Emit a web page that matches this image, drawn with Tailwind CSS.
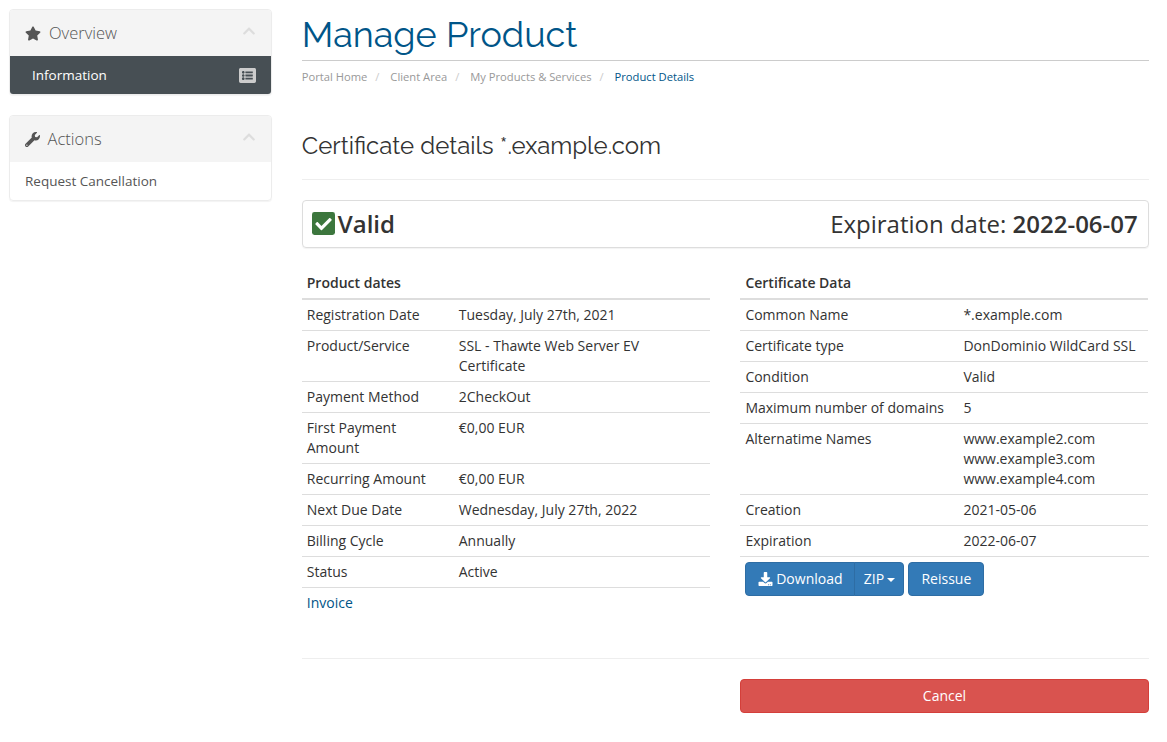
<!DOCTYPE html>
<html lang="en">
<head>
<meta charset="utf-8">
<title>Manage Product</title>
<script src="https://cdn.jsdelivr.net/npm/@tailwindcss/browser@4"></script>
</head>
<body class="bg-white font-['Open_Sans','Noto_Sans',sans-serif] text-sm leading-5 text-[#333]">
<div class="flex h-[742px] overflow-hidden">
  <aside class="ml-[9px] mt-[9px] w-[263px] shrink-0">
    <section class="mb-5 h-[86px] overflow-hidden rounded border border-[#ececec] shadow-[0_1px_1px_rgba(0,0,0,0.05)]">
      <h3 class="flex h-[46px] items-center bg-[#f4f4f4] pl-[15px] pr-[15px] text-[16.5px] font-light text-[#555]">
        <svg class="mt-px h-[15px] w-[16px] fill-[#555]" viewBox="0 0 576 512"><path d="M259.3 17.8L194 150.2 47.9 171.5c-26.2 3.8-36.7 36.1-17.7 54.6l105.7 103-25 145.5c-4.5 26.3 23.2 46 46.4 33.700L288 439.600l130.700 68.700c23.200 12.200 50.900-7.400 46.400-33.700l-25-145.500 105.700-103c19-18.500 8.500-50.800-17.700-54.600L382 150.200 316.700 17.800c-11.700-23.600-45.600-23.900-57.400 0z"/></svg>
        <span class="ml-2 grow">Overview</span>
        <svg class="-mt-1 h-[14px] w-[14px] fill-[#ddd]" viewBox="0 0 448 512"><path d="M240.971 130.524l194.343 194.343c9.373 9.373 9.373 24.569 0 33.941l-22.667 22.667c-9.357 9.357-24.522 9.375-33.901.040L224 227.495 69.255 381.516c-9.379 9.335-24.544 9.317-33.901-.040l-22.667-22.667c-9.373-9.373-9.373-24.569 0-33.941L207.030 130.525c9.372-9.373 24.568-9.373 33.941-.001z"/></svg>
      </h3>
      <a class="flex h-[38px] items-center justify-between bg-[#474f54] pl-[22px] pr-[15px] text-[13.5px] text-white">
        <span>Information</span>
        <svg class="h-[17px] w-[17px] fill-[#ccc]" viewBox="0 0 512 512"><path d="M464 480H48c-26.510 0-48-21.490-48-48V80c0-26.510 21.490-48 48-48h416c26.510 0 48 21.490 48 48v352c0 26.510-21.490 48-48 48zM128 120c-22.091 0-40 17.909-40 40s17.909 40 40 40 40-17.909 40-40-17.909-40-40-40zm0 96c-22.091 0-40 17.909-40 40s17.909 40 40 40 40-17.909 40-40-17.909-40-40-40zm0 96c-22.091 0-40 17.909-40 40s17.909 40 40 40 40-17.909 40-40-17.909-40-40-40zm288-136v-32c0-6.627-5.373-12-12-12H204c-6.627 0-12 5.373-12 12v32c0 6.627 5.373 12 12 12h200c6.627 0 12-5.373 12-12zm0 96v-32c0-6.627-5.373-12-12-12H204c-6.627 0-12 5.373-12 12v32c0 6.627 5.373 12 12 12h200c6.627 0 12-5.373 12-12zm0 96v-32c0-6.627-5.373-12-12-12H204c-6.627 0-12 5.373-12 12v32c0 6.627 5.373 12 12 12h200c6.627 0 12-5.373 12-12z"/></svg>
      </a>
    </section>
    <section class="h-[86px] overflow-hidden rounded border border-[#ececec] shadow-[0_1px_1px_rgba(0,0,0,0.05)]">
      <h3 class="flex h-[46px] items-center bg-[#f4f4f4] pl-[15px] pr-[15px] text-[16.5px] font-light text-[#555]">
        <svg class="mt-px h-[15px] w-[15px] fill-[#555]" viewBox="0 0 512 512"><path d="M507.730 109.100c-2.240-9.030-13.540-12.090-20.120-5.510l-74.360 74.360-67.880-11.310-11.310-67.880 74.360-74.360c6.620-6.620 3.430-17.900-5.660-20.160-47.380-11.740-99.550.910-136.580 37.930-39.640 39.640-50.550 97.100-34.050 147.200L18.740 402.760c-24.990 24.990-24.990 65.510 0 90.500 24.990 24.990 65.510 24.990 90.500 0l213.210-213.210c50.120 16.710 107.470 5.680 147.370-34.220 37.070-37.070 49.700-89.320 37.910-136.730zM64 472c-13.250 0-24-10.750-24-24 0-13.260 10.750-24 24-24s24 10.740 24 24c0 13.250-10.750 24-24 24z"/></svg>
        <span class="ml-[7.500px] grow">Actions</span>
        <svg class="-mt-1 h-[14px] w-[14px] fill-[#ddd]" viewBox="0 0 448 512"><path d="M240.971 130.524l194.343 194.343c9.373 9.373 9.373 24.569 0 33.941l-22.667 22.667c-9.357 9.357-24.522 9.375-33.901.040L224 227.495 69.255 381.516c-9.379 9.335-24.544 9.317-33.901-.040l-22.667-22.667c-9.373-9.373-9.373-24.569 0-33.941L207.030 130.525c9.372-9.373 24.568-9.373 33.941-.001z"/></svg>
      </h3>
      <a class="flex h-[38px] items-center px-[15px] text-[13.5px] text-[#555]">Request Cancellation</a>
    </section>
  </aside>

  <main class="ml-[29.750px] w-[847px] shrink-0">
    <h1 class="h-[61px] border-b border-[#ccc] pt-[14px] font-['Raleway','Lato',sans-serif] text-[36px] leading-10 text-[#058]"><span>Manage Product</span></h1>
    <nav class="flex h-8 items-center text-[11.200px] text-[#999]">
      <a>Portal Home</a><span class="w-[23px] pl-2 text-[#ccc]">/</span>
      <a>Client Area</a><span class="w-[23px] pl-2 text-[#ccc]">/</span>
      <a>My Products &amp; Services</a><span class="w-[23px] pl-2 text-[#ccc]">/</span>
      <span class="text-[#058]">Product Details</span>
    </nav>
    <h2 class="mt-[37px] h-[50px] border-b border-[#eee] pt-0.5 font-['Raleway','Lato',sans-serif] text-2xl leading-[28px]"><span>Certificate details *.example.com</span></h2>
    <div class="mt-5 flex h-12 items-center justify-between rounded border border-[#ddd] pl-[9px] pr-2.5 pb-px text-2xl shadow-[0_1px_1px_rgba(0,0,0,0.05)]">
      <div class="flex items-center font-semibold">
        <svg class="mr-[3px] h-[23px] w-[23px]" viewBox="0 0 448 448"><rect class="fill-[#3c763d]" width="448" height="448" rx="48"/><path class="fill-white" d="M195.300 350l184-184c6.300-6.300 6.300-16.400 0-22.600l-22.600-22.700c-6.300-6.200-16.400-6.200-22.600 0L184 270.700l-70-70c-6.300-6.300-16.400-6.300-22.700 0l-22.600 22.600c-6.300 6.300-6.300 16.400 0 22.600l104 104c6.200 6.300 16.300 6.300 22.600.1z"/></svg>
        <span>Valid</span>
      </div>
      <div>Expiration date: <b class="font-semibold">2022-06-07</b></div>
    </div>

    <div class="mt-5 flex h-[390px] justify-between">
      <table class="w-[408px] table-fixed border-separate border-spacing-0 self-start text-left [&_td]:p-[5px] [&_td]:align-top [&_tr+tr_td]:border-t [&_td]:border-[#ddd]">
        <colgroup><col class="w-[152px]"><col></colgroup>
        <thead><tr><th colspan="2" class="border-b-2 border-[#ddd] p-[5px] font-semibold">Product dates</th></tr></thead>
        <tbody>
          <tr><td>Registration Date</td><td>Tuesday, July 27th, 2021</td></tr>
          <tr><td>Product/Service</td><td>SSL - Thawte Web Server EV<br>Certificate</td></tr>
          <tr><td>Payment Method</td><td>2CheckOut</td></tr>
          <tr><td>First Payment<br>Amount</td><td>€0,00 EUR</td></tr>
          <tr><td>Recurring Amount</td><td>€0,00 EUR</td></tr>
          <tr><td>Next Due Date</td><td>Wednesday, July 27th, 2022</td></tr>
          <tr><td>Billing Cycle</td><td>Annually</td></tr>
          <tr><td>Status</td><td>Active</td></tr>
          <tr><td><a class="text-[#058]">Invoice</a></td><td></td></tr>
        </tbody>
      </table>
      <div class="-mr-[0.625px] w-[409px]">
        <table class="w-[408px] table-fixed border-separate border-spacing-0 text-left [&_td]:p-[5px] [&_td]:align-top [&_tr+tr_td]:border-t [&_td]:border-[#ddd]">
          <colgroup><col class="w-[218px]"><col></colgroup>
          <thead><tr><th colspan="2" class="border-b-2 border-[#ddd] p-[5px] font-semibold">Certificate Data</th></tr></thead>
          <tbody>
            <tr><td>Common Name</td><td>*.example.com</td></tr>
            <tr><td>Certificate type</td><td class="whitespace-nowrap">DonDominio WildCard SSL</td></tr>
            <tr><td>Condition</td><td>Valid</td></tr>
            <tr><td>Maximum number of domains</td><td>5</td></tr>
            <tr><td>Alternatime Names</td><td>www.example2.com<br>www.example3.com<br>www.example4.com</td></tr>
            <tr><td>Creation</td><td>2021-05-06</td></tr>
            <tr><td>Expiration</td><td>2022-06-07</td></tr>
          </tbody>
        </table>
        <div class="flex border-t border-[#ddd] p-[5px] text-white">
          <button class="flex h-[34px] w-[110px] items-center justify-center rounded-l border border-[#2e6da4] bg-[#337ab7]">
            <svg class="mr-[3px] h-[14px] w-[15px] fill-white" viewBox="0 0 512 512"><path d="M216 0h80c13.300 0 24 10.700 24 24v168h87.700c17.800 0 26.700 21.500 14.100 34.100L269.700 378.300c-7.500 7.500-19.800 7.500-27.300 0L90.100 226.100c-12.600-12.600-3.700-34.100 14.100-34.100H192V24c0-13.300 10.700-24 24-24zm296 376v112c0 13.300-10.700 24-24 24H24c-13.300 0-24-10.700-24-24V376c0-13.300 10.700-24 24-24h146.700l49 49c20.100 20.100 52.500 20.100 72.600 0l49-49H488c13.300 0 24 10.700 24 24zm-124 88c0-11-9-20-20-20s-20 9-20 20 9 20 20 20 20-9 20-20zm64 0c0-11-9-20-20-20s-20 9-20 20 9 20 20 20 20-9 20-20z"/></svg>
            Download
          </button>
          <button class="-ml-px flex h-[34px] w-[50px] items-center justify-center rounded-r border border-[#2e6da4] bg-[#337ab7]">ZIP<span class="ml-[3px] mt-px border-x-4 border-t-4 border-x-transparent border-t-white"></span></button>
          <button class="ml-1 h-[34px] w-[76px] rounded border border-[#2e6da4] bg-[#337ab7]">Reissue</button>
        </div>
      </div>
    </div>
    <div class="flex justify-end border-t border-[#eee] pt-5">
      <button class="-mr-[0.250px] h-[34px] w-[409px] rounded border border-[#d43f3a] bg-[#d9534f] text-white">Cancel</button>
    </div>
  </main>
</div>
</body>
</html>
